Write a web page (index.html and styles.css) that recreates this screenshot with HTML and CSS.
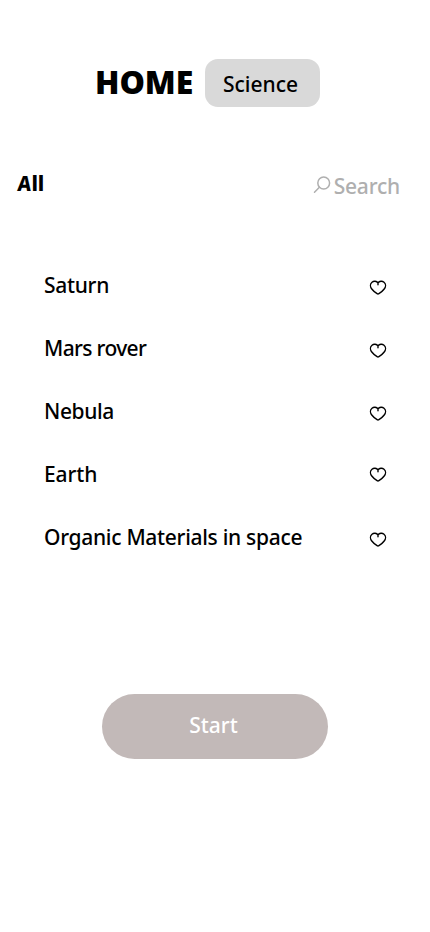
FILE: index.html
```html
<!DOCTYPE html>
<html lang="en">
<head>
<meta charset="utf-8">
<meta name="viewport" content="width=device-width, initial-scale=1">
<title>Home</title>
<link rel="stylesheet" href="styles.css">
</head>
<body>
<svg width="0" height="0" class="defs" aria-hidden="true">
  <symbol id="heart" viewBox="0 0 18 16">
    <path d="M9 4.8V2.9C7.6 .9 4.7 .8 3 2.2C.8 4 1.2 7 2.8 9C4.4 11.1 6.5 12.7 8.1 13.7Q9 14.3 9.9 13.7C11.5 12.7 13.6 11.1 15.2 9C16.8 7 17.2 4 15 2.2C13.3 .8 10.4 .9 9 2.9" fill="none" stroke="#000" stroke-width="1.4" stroke-linecap="round" stroke-linejoin="round"/>
  </symbol>
</svg>
<main class="screen">
  <header class="header">
    <h1 class="title">HOME</h1>
    <span class="tag">Science</span>
  </header>
  <div class="toolbar">
    <span class="all"><span class="slant">A</span>ll</span>
    <label class="search">
      <svg class="search-icon" width="18" height="18" viewBox="0 0 18 18"><circle cx="10.7" cy="7" r="5.9"/><path d="M6.4 11.3L1.5 16.2"/></svg>
      <span>Search</span>
    </label>
  </div>
  <ul class="list">
    <li class="row"><span class="name saturn">Saturn</span><svg class="heart"><use href="#heart"/></svg></li>
    <li class="row"><span class="name mars">Mars rover</span><svg class="heart"><use href="#heart"/></svg></li>
    <li class="row"><span class="name nebula">Nebula</span><svg class="heart"><use href="#heart"/></svg></li>
    <li class="row row-earth"><span class="name earth">Earth</span><svg class="heart"><use href="#heart"/></svg></li>
    <li class="row"><span class="name organic">Organic Materials in space</span><svg class="heart"><use href="#heart"/></svg></li>
  </ul>
  <button class="start">Start</button>
</main>
</body>
</html>
```
FILE: styles.css
```css
* { box-sizing: border-box; }
body { margin: 0; background: #fff; color: #000; font: 500 21px/30px "Noto Sans", sans-serif; }
.defs { display: block; }
.screen { width: 430px; height: 932px; padding-top: 59px; overflow: hidden; }
.header { display: flex; height: 48px; padding-left: 95px; }
.title { margin: 0; width: 110px; font: 900 32px/46px "Noto Sans", sans-serif; letter-spacing: -0.1px; }
.tag { width: 115px; height: 48px; padding-left: 18px; border-radius: 13px; background: #d9d9d9; line-height: 50px; }
.toolbar { display: flex; justify-content: space-between; margin-top: 62px; padding: 0 30px 0 17px; height: 32px; }
.all { font-weight: 800; line-height: 28px; letter-spacing: -0.3px; }
.slant { display: inline-block; transform: skewX(-5deg) scaleX(.92); }
.search { display: flex; color: #afafaf; line-height: 34px; letter-spacing: -0.2px; }
.search-icon { margin: 7px 3px 0 0; fill: none; stroke: #afafaf; stroke-width: 1.5; stroke-linecap: round; }
.list { list-style: none; margin: 69px 0 0; padding: 0 44px; }
.row { display: flex; justify-content: space-between; height: 63px; }
.name { white-space: nowrap; }
.saturn { letter-spacing: -0.3px; }
.mars { letter-spacing: -0.65px; }
.nebula { letter-spacing: -0.4px; }
.earth { letter-spacing: -0.1px; }
.organic { letter-spacing: -0.3px; }
.heart { width: 18px; height: 16px; margin: 10px -1px 0 0; }
.row-earth .heart { margin-top: 8px; }
.start { display: block; width: 226px; height: 65px; margin: 109px 0 0 102px; padding: 0 3px 3px 0; border: 0; border-radius: 33px; background: #c2b9b8; color: #fff; font: inherit; }
```
